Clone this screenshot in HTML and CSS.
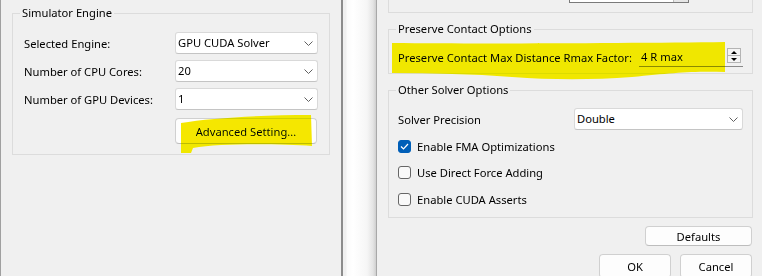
FILE: index.html
```html
<!DOCTYPE html>
<html lang="en">
<head>
    <meta charset="UTF-8">
    <meta name="viewport" content="width=device-width, initial-scale=1.0">
    <title>Simulator Settings</title>
    <link rel="stylesheet" href="styles.css">
</head>
<body>

<!-- Левая панель -->
<div class="left-pane">
    <fieldset class="group group-engine">
        <legend>Simulator Engine</legend>
        <div class="form-row">
            <span class="label label-engine">Selected Engine:</span>
            <div class="combo">GPU CUDA Solver<svg class="chevron" width="9" height="5" viewBox="0 0 9 5"><path d="M0.5 0.5 L4.5 4.5 L8.5 0.5" fill="none" stroke="#606060" stroke-width="1"/></svg></div>
        </div>
        <div class="form-row">
            <span class="label label-engine">Number of CPU Cores:</span>
            <div class="combo">20<svg class="chevron" width="9" height="5" viewBox="0 0 9 5"><path d="M0.5 0.5 L4.5 4.5 L8.5 0.5" fill="none" stroke="#606060" stroke-width="1"/></svg></div>
        </div>
        <div class="form-row">
            <span class="label label-engine">Number of GPU Devices:</span>
            <div class="combo">1<svg class="chevron" width="9" height="5" viewBox="0 0 9 5"><path d="M0.5 0.5 L4.5 4.5 L8.5 0.5" fill="none" stroke="#606060" stroke-width="1"/></svg></div>
        </div>
        <div class="form-row">
            <button class="btn btn-advanced">Advanced Setting...</button>
        </div>
    </fieldset>
    <svg class="marker marker-left" width="132" height="40" viewBox="0 0 132 40"><path d="M0 8 C30 3 80 0 130 0 L131 31 C100 29 40 28 12 33 L10 38 L0 38 Z" fill="#f5e700"/></svg>
</div>

<!-- Разделитель -->
<div class="splitter"></div>

<!-- Правая панель -->
<div class="right-pane">
    <div class="group-tail">
        <div class="form-row tail-row">
            <span class="label label-tail">Thread Group</span>
            <div class="combo combo-old"><span class="drop-btn"></span></div>
        </div>
    </div>

    <fieldset class="group group-right group-preserve">
        <legend>Preserve Contact Options</legend>
        <div class="form-row spin-row">
            <span class="label label-spin">Preserve Contact Max Distance Rmax Factor:</span>
            <div class="spinbox">
                <span class="spin-value">4 R max</span>
                <div class="spin-btns">
                    <span class="spin-up"></span>
                    <span class="spin-down"></span>
                </div>
            </div>
        </div>
    </fieldset>

    <fieldset class="group group-right group-other">
        <legend>Other Solver Options</legend>
        <div class="form-row">
            <span class="label label-precision">Solver Precision</span>
            <div class="combo">Double<svg class="chevron" width="9" height="5" viewBox="0 0 9 5"><path d="M0.5 0.5 L4.5 4.5 L8.5 0.5" fill="none" stroke="#606060" stroke-width="1"/></svg></div>
        </div>
        <label class="check-row">
            <span class="checkbox checked"><svg width="9" height="7" viewBox="0 0 9 7"><path d="M1 3.5 L3.5 6 L8 1" fill="none" stroke="#fff" stroke-width="1.2"/></svg></span>
            Enable FMA Optimizations
        </label>
        <label class="check-row">
            <span class="checkbox"></span>
            Use Direct Force Adding
        </label>
        <label class="check-row">
            <span class="checkbox"></span>
            Enable CUDA Asserts
        </label>
    </fieldset>

    <div class="buttons">
        <button class="btn btn-defaults">Defaults</button>
        <div class="buttons-main">
            <button class="btn btn-dialog">OK</button>
            <button class="btn btn-dialog">Cancel</button>
        </div>
    </div>

    <svg class="marker marker-right" width="334" height="40" viewBox="0 0 334 40"><path d="M0 1 C100 2 250 1 333 0 L333 30 C300 29 280 31 240 35 C200 38 160 38 120 35 C80 32 40 31 0 31 Z" fill="#f5e700"/></svg>
</div>

</body>
</html>
```

FILE: styles.css
```css
body {
    font-family: 'Segoe UI', 'Noto Sans', sans-serif;
    font-size: 11.2px;
    color: #000;
    background: #f0f0f0;
    margin: 0;
    width: 762px;
    height: 276px;
    overflow: hidden;
    display: flex;
}
.left-pane {
    position: relative;
    flex: none;
    border-left: 1px solid #a0a0a0;
    border-right: 2px solid #8c8c8c;
    padding: 5px 11px 0 11px;
    box-sizing: border-box;
    width: 343px;
}
.splitter {
    width: 34px;
    flex: none;
    background: linear-gradient(to right, #f0f0f0 0, #f0f0f0 3px, #fbfbfb 4px, #fff 10px, #f6f6f6 24px, #e4e4e4 30px, #cfcfcf 33px, #a8a8a8 33px);
}
.right-pane {
    position: relative;
    flex: 1;
    padding: 0 10px 0 11px;
}
.group {
    margin: 0;
    padding: 11px 11px 10px 11px;
    border: 1px solid #dcdcdc;
    min-width: 0;
}
.group legend {
    padding: 0 2px;
    margin-left: -4px;
    line-height: 16px;
}
.form-row {
    display: flex;
    align-items: center;
    margin-bottom: 6px;
}
.form-row:last-child {
    margin-bottom: 0;
}
.group-engine .form-row:last-child {
    margin-top: 8px;
}
.label {
    flex: none;
    white-space: nowrap;
}
.label-engine {
    width: 151px;
}
.combo {
    position: relative;
    flex: 1;
    height: 22px;
    box-sizing: border-box;
    background: #fff;
    border: 1px solid #d9d9d9;
    border-bottom-color: #c4c4c4;
    border-radius: 3px;
    padding-left: 2px;
    line-height: 20px;
}
.chevron {
    position: absolute;
    right: 4px;
    top: 8px;
}
.btn {
    font-family: inherit;
    font-size: 11.2px;
    color: #000;
    background: #fdfdfd;
    border: 1px solid #d0d0d0;
    border-bottom-color: #bdbdbd;
    border-radius: 4px;
    padding: 0;
}
.btn-advanced {
    margin-left: 151px;
    width: 142px;
    height: 26px;
}

/* правая сторона */
.group-tail {
    height: 12px;
    border: 1px solid #dcdcdc;
    border-top: none;
    overflow: hidden;
    padding: 0 9px;
}
.tail-row {
    margin-top: -19px;
}
.label-tail {
    width: 171px;
    text-align: right;
    padding-right: 10px;
    box-sizing: border-box;
}
.combo-old {
    flex: none;
    width: 120px;
    border-radius: 0;
    border-color: #7a7a7a;
}
.drop-btn {
    position: absolute;
    right: 0;
    top: 0;
    bottom: 0;
    width: 14px;
    background: #e6e6e6;
    border-left: 1px solid #bcbcbc;
}
.group-right {
    margin-top: 8px;
    padding: 10px 9px 7px 9px;
}
.group-preserve {
    padding-bottom: 6px;
}
.group-right legend {
    margin-left: -2px;
}
.spinbox {
    position: relative;
    width: 104px;
    height: 19px;
    border-bottom: 1px solid #8a8a8a;
    display: flex;
    align-items: center;
}
.label-spin {
    width: 241px;
}
.spin-value {
    padding-left: 2px;
}
.spin-btns {
    position: absolute;
    right: 2px;
    top: 1px;
    width: 14px;
    height: 15px;
    box-sizing: border-box;
    border: 1px solid #b4b4b4;
    background: #f4f4f4;
    display: flex;
    flex-direction: column;
}
.spin-up, .spin-down {
    flex: 1;
    position: relative;
}
.spin-up {
    border-bottom: 1px solid #b4b4b4;
}
.spin-up::after, .spin-down::after {
    content: '';
    position: absolute;
    left: 3px;
    top: 2px;
    border-left: 3px solid transparent;
    border-right: 3px solid transparent;
}
.spin-up::after {
    border-bottom: 3px solid #000;
}
.spin-down::after {
    border-top: 3px solid #000;
}
.group-other {
    padding-bottom: 8px;
}
.label-precision {
    width: 176px;
}
.check-row {
    display: flex;
    align-items: center;
    height: 20px;
    margin-top: 6px;
}
.check-row:last-child {
    margin-top: 7px;
}
.checkbox {
    width: 13px;
    height: 13px;
    box-sizing: border-box;
    border: 1px solid #666;
    border-radius: 3px;
    background: #f9f9f9;
    margin-right: 6px;
    display: flex;
    align-items: center;
    justify-content: center;
}
.checkbox.checked {
    background: #005fb8;
    border-color: #005fb8;
}
.buttons {
    display: flex;
    flex-direction: column;
    align-items: flex-end;
    margin: 8px 1px 0 0;
}
.btn-defaults {
    width: 107px;
    height: 20px;
}
.buttons-main {
    display: flex;
    gap: 9px;
    margin-top: 8px;
}
.btn-dialog {
    width: 72px;
    height: 24px;
}
.marker {
    position: absolute;
    mix-blend-mode: darken;
    pointer-events: none;
}
.marker-left {
    left: 180px;
    top: 115px;
}
.marker-right {
    left: 15px;
    top: 42px;
}
```
